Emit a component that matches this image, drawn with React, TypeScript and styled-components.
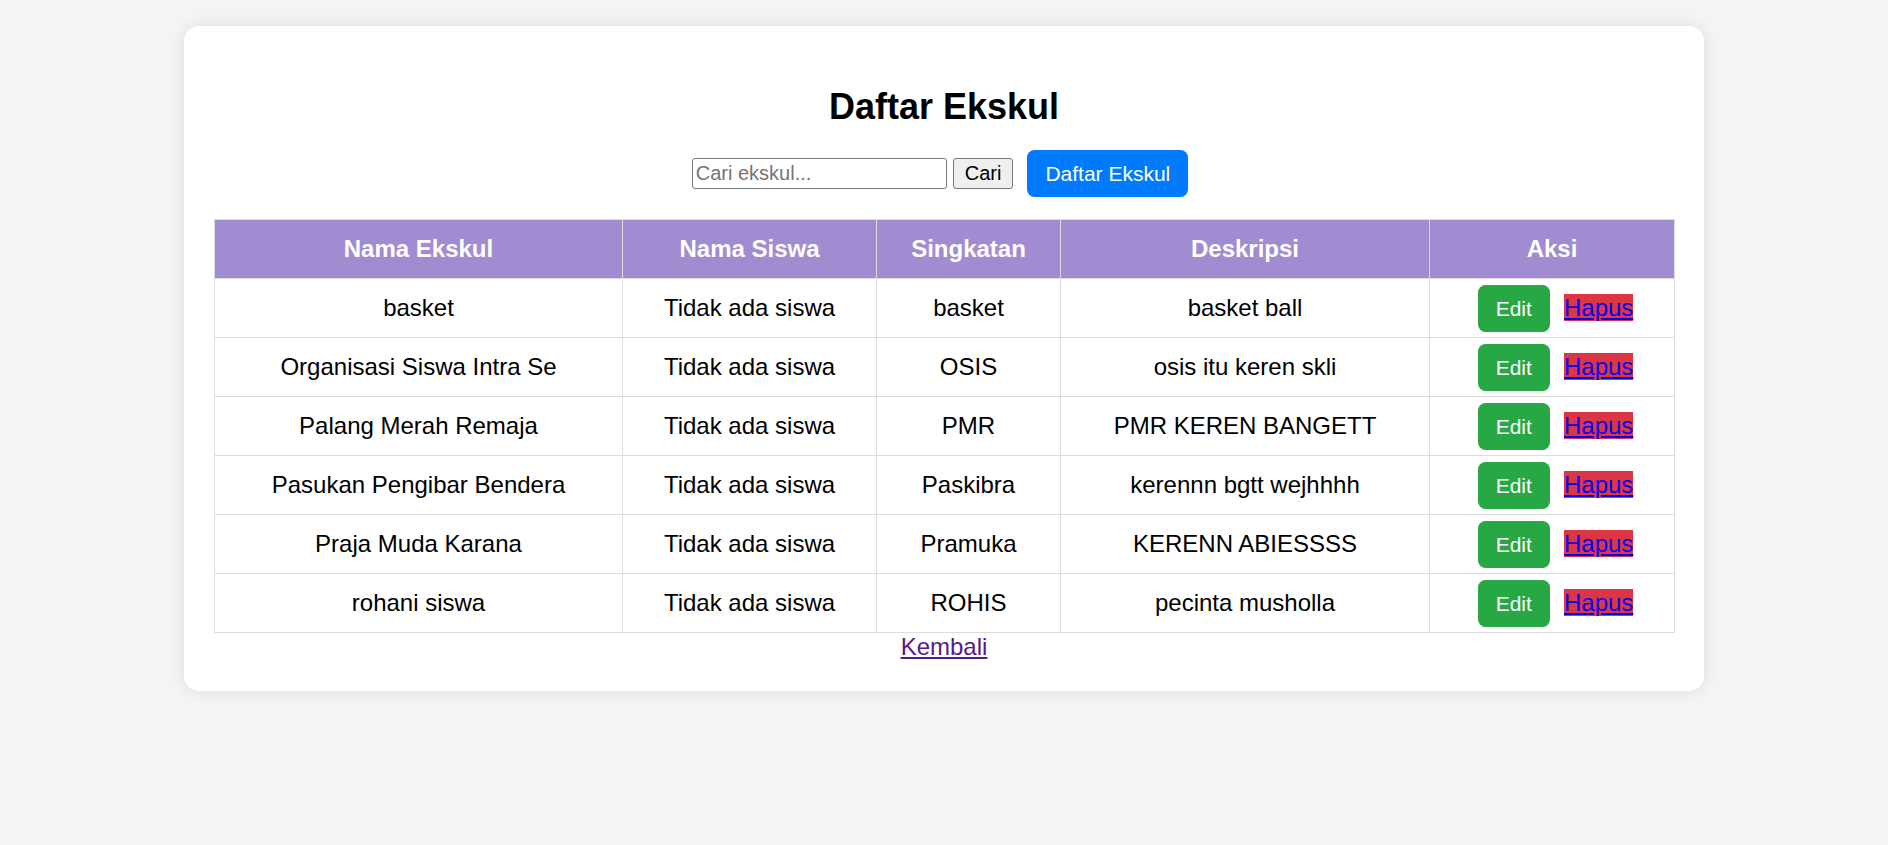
import React from "react";
import styled, { createGlobalStyle } from "styled-components";

const GlobalStyle = createGlobalStyle`
  html, body {
    margin: 0;
    padding: 0;
    background: #f4f4f4;
    font-family: "Liberation Sans", Arial, sans-serif;
  }
`;

const Page = styled.div`
  padding-top: 26px;
  padding-bottom: 40px;
`;

const Card = styled.main`
  width: 1520px;
  box-sizing: border-box;
  margin: 0 auto;
  padding: 30px;
  background: #ffffff;
  border-radius: 15px;
  box-shadow: 0 0 15px rgba(0, 0, 0, 0.1);
`;

const Title = styled.h2`
  margin: 30px 0 31px;
  font-size: 36px;
  line-height: 41px;
  font-weight: bold;
  color: #000;
  text-align: center;
`;

const Toolbar = styled.form`
  display: flex;
  justify-content: center;
  align-items: center;
  height: 31px;
  padding-right: 8px;
  margin: 0 0 30px;
`;

const SearchInput = styled.input`
  box-sizing: border-box;
  width: 255px;
  height: 31px;
  padding: 0 3px;
  border: 1px solid #767676;
  border-radius: 3px;
  font-family: "Liberation Sans", Arial, sans-serif;
  font-size: 20px;
  color: #000;
  background: #fff;
  &::placeholder {
    color: #757575;
  }
`;

const SearchButton = styled.button`
  box-sizing: border-box;
  height: 31px;
  margin-left: 6px;
  padding: 0 11px;
  border: 1px solid #767676;
  border-radius: 3px;
  background: #efefef;
  font-family: "Liberation Sans", Arial, sans-serif;
  font-size: 20px;
  color: #000;
`;

const PrimaryLink = styled.a`
  display: flex;
  align-items: center;
  box-sizing: border-box;
  height: 47px;
  margin: -8px 0 -8px 14px;
  padding: 0 18px;
  border-radius: 7.5px;
  background: #007bff;
  color: #fff;
  font-size: 21px;
  text-decoration: none;
  white-space: nowrap;
`;

const Table = styled.table`
  width: 100%;
  border-collapse: collapse;
  table-layout: fixed;
`;

const HeadCell = styled.th`
  padding: 15px;
  border: 1px solid #ddd;
  background: #a18cd1;
  color: #fff;
  font-size: 24px;
  line-height: 28px;
  font-weight: bold;
  text-align: center;
`;

const Cell = styled.td`
  padding: 15px;
  border: 1px solid #ddd;
  color: #000;
  font-size: 24px;
  line-height: 28px;
  text-align: center;
  white-space: nowrap;
  overflow: visible;
`;

const EditLink = styled.a`
  margin-left: 7px;
  margin-right: 7.5px;
  padding: 12px 18px;
  border-radius: 7.5px;
  background: #28a745;
  color: #fff;
  font-size: 21px;
  line-height: 21px;
  text-decoration: none;
`;

const DeleteLink = styled.a`
  background: #dc3545;
  color: #0000ee;
  text-decoration: underline;
`;

const Footer = styled.div`
  text-align: center;
  font-size: 24px;
  line-height: 28px;
`;

const BackLink = styled.a`
  color: #551a8b;
  text-decoration: underline;
`;

const columns = [
  { label: "Nama Ekskul", width: 408 },
  { label: "Nama Siswa", width: 254 },
  { label: "Singkatan", width: 184 },
  { label: "Deskripsi", width: 369 },
  { label: "Aksi", width: 245 },
];

const rows = [
  ["basket", "Tidak ada siswa", "basket", "basket ball"],
  ["Organisasi Siswa Intra Se", "Tidak ada siswa", "OSIS", "osis itu keren skli"],
  ["Palang Merah Remaja", "Tidak ada siswa", "PMR", "PMR KEREN BANGETT"],
  ["Pasukan Pengibar Bendera", "Tidak ada siswa", "Paskibra", "kerennn bgtt wejhhhh"],
  ["Praja Muda Karana", "Tidak ada siswa", "Pramuka", "KERENN ABIESSSS"],
  ["rohani siswa", "Tidak ada siswa", "ROHIS", "pecinta musholla"],
];

export default function App() {
  return (
    <>
      <GlobalStyle />
      <Page>
        <Card>
          <Title>Daftar Ekskul</Title>
          <Toolbar onSubmit={(e) => e.preventDefault()}>
            <SearchInput type="text" placeholder="Cari ekskul..." />
            <SearchButton type="submit">Cari</SearchButton>
            <PrimaryLink href="#">Daftar Ekskul</PrimaryLink>
          </Toolbar>
          <Table>
            <colgroup>
              {columns.map((c) => (
                <col key={c.label} style={{ width: c.width }} />
              ))}
            </colgroup>
            <thead>
              <tr>
                {columns.map((c) => (
                  <HeadCell key={c.label}>{c.label}</HeadCell>
                ))}
              </tr>
            </thead>
            <tbody>
              {rows.map((r, i) => (
                <tr key={i}>
                  {r.map((v, j) => (
                    <Cell key={j}>{v}</Cell>
                  ))}
                  <Cell>
                    <EditLink href="#">Edit</EditLink>{" "}
                    <DeleteLink href="#">Hapus</DeleteLink>
                  </Cell>
                </tr>
              ))}
            </tbody>
          </Table>
          <Footer>
            <BackLink href="#">Kembali</BackLink>
          </Footer>
        </Card>
      </Page>
    </>
  );
}
